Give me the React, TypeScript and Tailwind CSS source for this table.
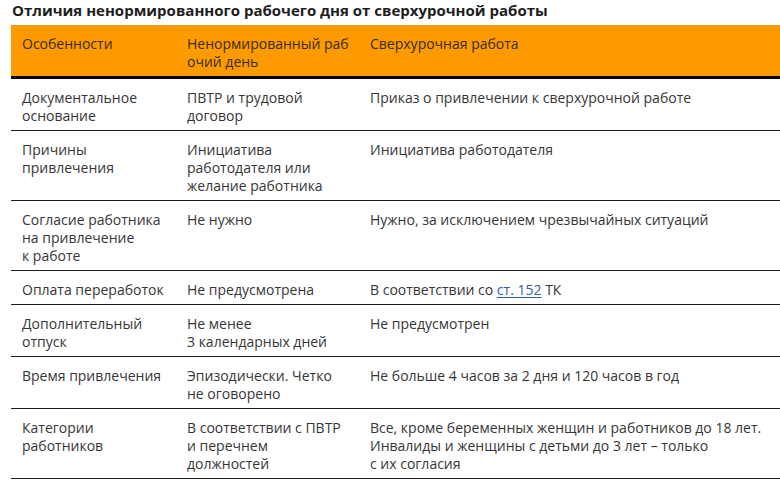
const HEAD = [["Особенности"], ["Ненормированный раб", "очий день"], ["Сверхурочная работа"]];

type Cell = React.ReactNode[];

const ROWS: Cell[][] = [
  [["Документальное", "основание"], ["ПВТР и трудовой", "договор"], ["Приказ о привлечении к сверхурочной работе"]],
  [["Причины", "привлечения"], ["Инициатива", "работодателя или", "желание работника"], ["Инициатива работодателя"]],
  [
    ["Согласие работника", "на привлечение", "к работе"],
    ["Не нужно"],
    ["Нужно, за исключением чрезвычайных ситуаций"],
  ],
  [
    ["Оплата переработок"],
    ["Не предусмотрена"],
    [
      <>
        В соответствии со{" "}
        <a href="#" className="text-[#2f5f9e] underline underline-offset-2">
          ст. 152
        </a>{" "}
        ТК
      </>,
    ],
  ],
  [["Дополнительный", "отпуск"], ["Не менее", "3 календарных дней"], ["Не предусмотрен"]],
  [["Время привлечения"], ["Эпизодически. Четко", "не оговорено"], ["Не больше 4 часов за 2 дня и 120 часов в год"]],
  [
    ["Категории", "работников"],
    ["В соответствии с ПВТР", "и перечнем", "должностей"],
    ["Все, кроме беременных женщин и работников до 18 лет.", "Инвалиды и женщины с детьми до 3 лет – только", "с их согласия"],
  ],
];

const COLS = ["w-[165px]", "w-[183px]", "flex-1"];

function Lines({ lines }: { lines: Cell }) {
  return (
    <>
      {lines.map((l, i) => (
        <div key={i} className="whitespace-nowrap">
          {l}
        </div>
      ))}
    </>
  );
}

export default function App() {
  return (
    <div className="h-[480px] w-[780px] overflow-hidden bg-white font-['Open_Sans',sans-serif] text-[14px] leading-[18px] text-[#363636]">
      <h1 className="pl-[12px] text-[15px] font-bold leading-[20px] text-[#1e1e1e]">
        Отличия ненормированного рабочего дня от сверхурочной работы
      </h1>

      <div className="ml-[11px] mt-[5px]">
        <div className="flex border-b-[3px] border-black bg-[#fd9a00] text-[#3a2c14]">
          {HEAD.map((c, i) => (
            <div key={i} className={`${COLS[i]} pl-[11px] pt-[10px] pb-[5px]`}>
              <Lines lines={c} />
            </div>
          ))}
        </div>

        {ROWS.map((row, r) => (
          <div key={r} className="flex border-b border-[#1c1c1c]">
            {row.map((c, i) => (
              <div key={i} className={`${COLS[i]} pl-[11px] pt-[10px] pb-[5px]`}>
                <Lines lines={c} />
              </div>
            ))}
          </div>
        ))}
      </div>
    </div>
  );
}
